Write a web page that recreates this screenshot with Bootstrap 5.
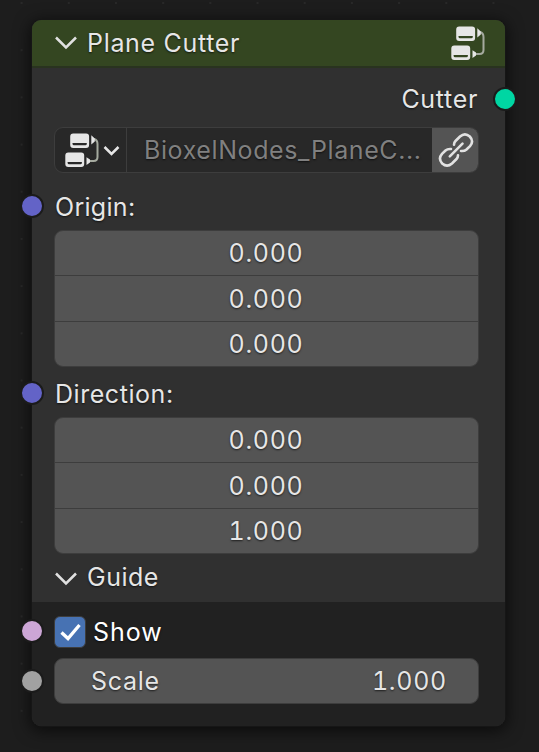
<!DOCTYPE html>
<html lang="en">
<head>
<meta charset="utf-8">
<meta name="viewport" content="width=device-width, initial-scale=1">
<title>Plane Cutter</title>
<link href="https://cdn.jsdelivr.net/npm/bootstrap@5.3.0/dist/css/bootstrap.min.css" rel="stylesheet">
<style>
  body { background-color: #1d1d1d; background-image: radial-gradient(circle, #292929 0 1px, transparent 1.5px); background-size: 47.2px 47.2px; background-position: -2px -20.6px; font-family: Inter, sans-serif; font-size: 25px; line-height: 30px; letter-spacing: .68px; color: #e6e6e6; height: 752px; overflow: hidden; padding: 20px 0 0 32px; text-shadow: 0 1px 2px rgba(0,0,0,.65); white-space: nowrap; }
  .node { width: 473px; height: 706px; border-radius: 9px; background: #303030; box-shadow: 0 0 0 1px #161616, 0 3px 16px 2px rgba(0,0,0,.62); }
  .node-head { height: 48px; background: #344621; border-bottom: 2px solid #29331f; border-radius: 9px 9px 0 0; padding: 0 20px 0 23px; }
  .node-main { height: 534px; padding: 0 26px 0 22px; }
  .node-sub { height: 124px; background: #212121; border-radius: 0 0 9px 9px; padding: 14px 26px 0 22px; }
  .chev { width: 22px; height: 14px; margin-right: 10px; }
  .out-row { height: 59px; padding: 3px 1px 0 0; }
  .origin-row { height: 57px; padding: 11px 0 0 1px; letter-spacing: .3px; }
  .dir-row { height: 50.5px; padding: 5px 0 0 1px; letter-spacing: .55px; }
  .guide-row { height: 47px; padding-left: 1px; letter-spacing: .5px; }
  .socket { width: 24px; height: 24px; border: 2px solid #1b1b1b; border-radius: 50%; left: -34px; }
  .socket-vec { background: #6363c7; top: 21px; }
  .dir-row .socket-vec { top: 14px; }
  .socket-geo { background: #00d6a3; left: auto; right: -38px; top: 19px; }
  .socket-bool { background: #cca6d6; top: 3px; }
  .socket-num { background: #a1a1a1; left: -35px; top: 10px; }
  .picker { height: 46px; border: 1px solid #3d3d3d; border-radius: 9px; background: #282828; overflow: hidden; }
  .picker-type { width: 72px; border-right: 1px solid #3d3d3d; padding-left: 10px; }
  .picker-name { color: #808080; padding-left: 17px; letter-spacing: .6px; }
  .picker-link { width: 46px; background: #545454; padding-left: 1px; }
  .vec, .num { border: 1px solid #3d3d3d; border-radius: 9px; background: #545454; }
  .vec { height: 136.5px; }
  .cell { height: 43.5px; padding-right: 1px; }
  .digits { font-variant-numeric: tabular-nums; letter-spacing: .7px; }
  .cell + .cell { height: 46px; border-top: 1px solid #3d3d3d; padding-top: 1px; }
  .cell:last-child { height: 45px; }
  .check { width: 32px; height: 32px; border: 1px solid #3d3d3d; border-radius: 6px; background: #4772b3; margin-right: 7px; }
  .show-row { color: #fff; height: 31px; letter-spacing: .95px; }
  .num { height: 46px; margin-top: 11px; padding: 0 31px 0 36px; }
</style>
</head>
<body>
<svg class="d-none" aria-hidden="true">
  <symbol id="tree" viewBox="0 0 34 35">
    <path d="M29 6Q32.500 7 32.500 11V24q0 4-4 4H25" fill="none" stroke="#a5aa9f" stroke-width="2"/>
    <path d="M26.300 2.200L29.800 5.500v3l-3.500 3zM21.500 24.300L25 26.500v3l-3.500 2.500z" fill="#e6e6e6"/>
    <path fill="#e6e6e6" fill-rule="evenodd" d="M8.200 .5h12.900q3 0 3 3v8.500q0 3-3 3H8.200q-3 0-3-3V3.500q0-3 3-3zM7.500 10v.7q0 1.500 1.500 1.500h11.300q1.500 0 1.500-1.500V10zM3.300 19.500h12.900q3 0 3 3V31q0 3-3 3H3.300q-3 0-3-3v-8.500q0-3 3-3zM2.600 29v.7q0 1.500 1.500 1.500h11.300q1.500 0 1.500-1.500V29z"/>
  </symbol>
  <symbol id="chevron" viewBox="0 0 22 14">
    <path d="M1 1.500L11 11.500L21 1.500" fill="none" stroke="#e0e0e0" stroke-width="2.500"/>
  </symbol>
</svg>
<main class="node">
  <header class="node-head d-flex align-items-center">
    <svg class="chev"><use href="#chevron"/></svg>
    <span>Plane Cutter</span>
    <svg class="ms-auto" width="34" height="35"><use href="#tree"/></svg>
  </header>
  <section class="node-main">
    <div class="out-row position-relative d-flex align-items-center justify-content-end">
      <span>Cutter</span><i class="socket socket-geo position-absolute"></i>
    </div>
    <div class="picker d-flex">
      <div class="picker-type d-flex align-items-center flex-shrink-0">
        <svg width="34" height="35"><use href="#tree"/></svg>
        <svg class="ms-1" width="17" height="12" viewBox="0 0 17 12"><path d="M1.500 3l7 7 7-7" fill="none" stroke="#e6e6e6" stroke-width="2.500"/></svg>
      </div>
      <div class="picker-name flex-grow-1 d-flex align-items-center">BioxelNodes_PlaneC...</div>
      <div class="picker-link d-flex align-items-center justify-content-center flex-shrink-0">
        <svg width="36" height="36" viewBox="0 0 36 36" fill="none" stroke="#e2e2e2" stroke-width="2.600" stroke-linecap="round">
          <path d="M11.800 24.300L24.500 11.700"/>
          <path d="M16 12.700Q16 10.500 17.500 9L22 4.500Q27 .2 31.800 4.500Q36.200 9.300 32 14.200L28.500 17.500Q26.500 19.300 23 19"/>
          <path d="M20 23.300Q20 25.500 18.500 27L14 31.500Q9 35.800 4.200 31.500Q-.2 26.700 4 21.800L7.500 18.500Q9.500 16.700 13 17"/>
        </svg>
      </div>
    </div>
    <div class="origin-row position-relative d-flex align-items-center"><i class="socket socket-vec position-absolute"></i>Origin:</div>
    <div class="vec digits">
      <div class="cell d-flex align-items-center justify-content-center">0.000</div>
      <div class="cell d-flex align-items-center justify-content-center">0.000</div>
      <div class="cell d-flex align-items-center justify-content-center">0.000</div>
    </div>
    <div class="dir-row position-relative d-flex align-items-center"><i class="socket socket-vec position-absolute"></i>Direction:</div>
    <div class="vec digits">
      <div class="cell d-flex align-items-center justify-content-center">0.000</div>
      <div class="cell d-flex align-items-center justify-content-center">0.000</div>
      <div class="cell d-flex align-items-center justify-content-center">1.000</div>
    </div>
    <div class="guide-row d-flex align-items-center"><svg class="chev mt-1"><use href="#chevron"/></svg>Guide</div>
  </section>
  <section class="node-sub">
    <div class="show-row position-relative d-flex align-items-center">
      <i class="socket socket-bool position-absolute"></i>
      <span class="check d-flex align-items-center justify-content-center"><svg width="21" height="18" viewBox="0 0 21 18"><path d="M1.500 9.500l6.500 6L19.500 2" fill="none" stroke="#fff" stroke-width="3.300"/></svg></span>Show
    </div>
    <div class="num position-relative d-flex align-items-center justify-content-between">
      <i class="socket socket-num position-absolute"></i><span>Scale</span><span class="digits">1.000</span>
    </div>
  </section>
</main>
<script src="https://cdn.jsdelivr.net/npm/bootstrap@5.3.0/dist/js/bootstrap.bundle.min.js"></script>
</body>
</html>
